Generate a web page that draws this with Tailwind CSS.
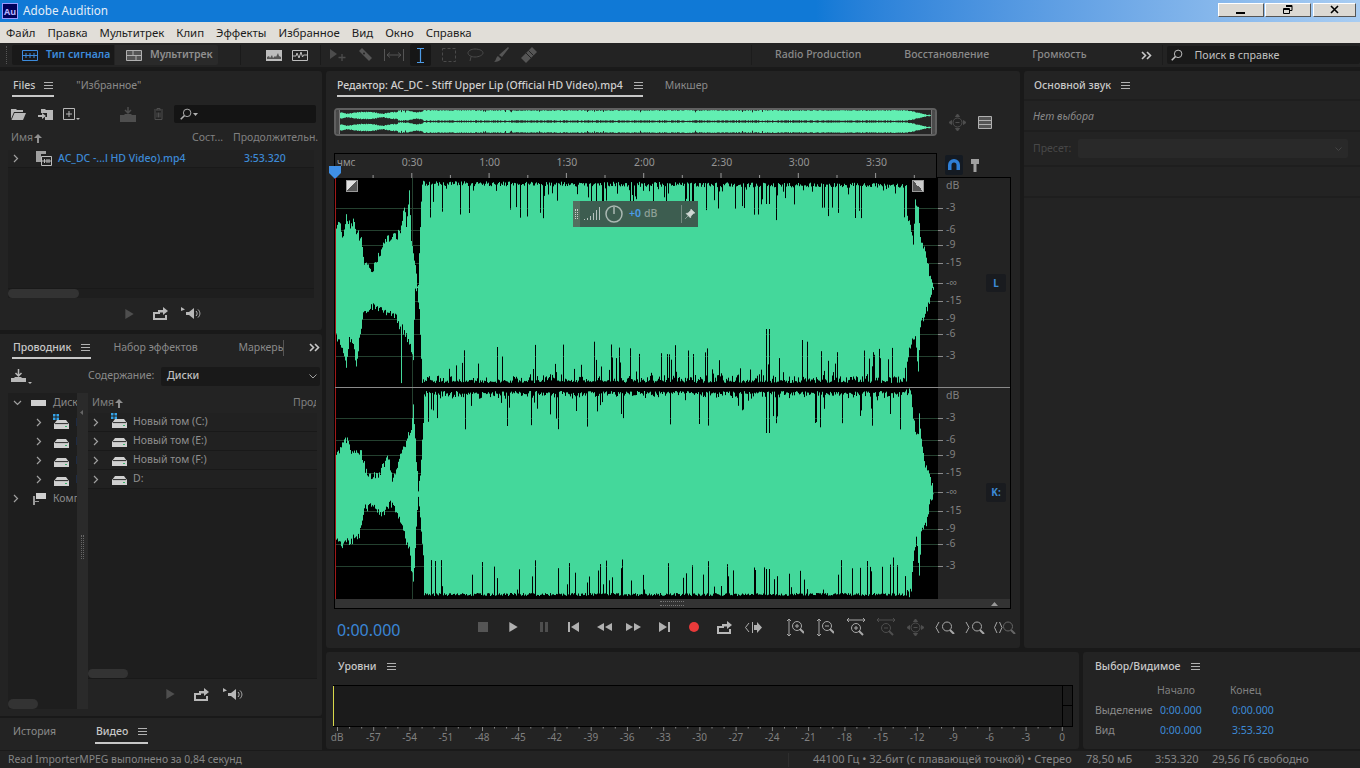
<!DOCTYPE html>
<html lang="ru">
<head>
    <meta charset="UTF-8">
    <title>Adobe Audition</title>
    <script src="https://cdn.jsdelivr.net/npm/@tailwindcss/browser@4"></script>
</head>
<body class="bg-[#191919] overflow-hidden">

<!-- shared icons -->
<svg class="hidden">
    <symbol id="i-menu" viewBox="0 0 9 8"><path d="M0 .5h9M0 3.5h9M0 6.5h9" stroke="currentColor" fill="none"/></symbol>
    <symbol id="i-chev" viewBox="0 0 6 9"><path d="M1 1l3.5 3.5L1 8" stroke="currentColor" fill="none" stroke-width="1.2"/></symbol>
    <symbol id="i-drive" viewBox="0 0 15 9"><path d="M3 0h9l3 4v5H0V4z" fill="#d0d0d0"/><path d="M1 3.600h13" stroke="#2a2a2a"/><rect x="11" y="6" width="2" height="1" fill="#39b36b"/></symbol>
    <symbol id="i-win" viewBox="0 0 6 6"><path d="M0 0h2.500v2.500H0zM3.500 0H6v2.500H3.500zM0 3.500h2.500V6H0zM3.500 3.500H6V6H3.500z" fill="#35a3e8"/></symbol>
    <symbol id="i-export" viewBox="0 0 15 13"><path d="M0 5h7v2H2v4h10V8h2v5H0z" fill="currentColor"/><path d="M5 6V3h5V0l5 4-5 4V5.500H7V6z" fill="currentColor"/></symbol>
    <symbol id="i-vol" viewBox="0 0 21 13"><path d="M0 0l4 2.500L0 4z" fill="currentColor"/><path d="M5 5h3l5-4v11l-5-4H5z" fill="currentColor"/><path d="M15 4c1.500 1.500 1.500 3.500 0 5M17 2.500c2.500 2.500 2.500 5.500 0 8" stroke="currentColor" fill="none"/></symbol>
    <symbol id="i-play" viewBox="0 0 10 12"><path d="M0 0l10 6-10 6z" fill="currentColor"/></symbol>
    <symbol id="i-mag" viewBox="0 0 16 16"><circle cx="6.500" cy="6.500" r="5" stroke="currentColor" fill="none" stroke-width="1.300"/><path d="M10 10l5 5" stroke="currentColor" stroke-width="2.200"/></symbol>
</svg>

<div class="w-[1360px] h-[768px] flex flex-col font-['Noto_Sans','Liberation_Sans',sans-serif] text-[10.500px] text-[#9a9a9a] overflow-hidden whitespace-nowrap [&_svg]:shrink-0">

    <!-- title bar -->
    <div class="h-[22px] flex items-center bg-gradient-to-r from-[#1079d6] from-60% to-[#a9cdf2] shrink-0">
        <div class="w-[16px] h-[16px] ml-[2px] bg-[#00005b] border border-[#9999ff] flex items-center justify-center text-[9px] font-bold text-[#b0b0ff] leading-none">Au</div>
        <div class="ml-[5px] text-[11.700px] text-[#e4eef8]">Adobe Audition</div>
        <div class="ml-auto flex mr-[4px] gap-[1px] -mt-[2px]">
            <div class="w-[46px] h-[14px] bg-[#dcd9d3] border-t border-l border-white border-r border-b border-r-[#555] border-b-[#555] flex items-center justify-center">
                <svg class="w-[10px] h-[10px]" viewBox="0 0 10 10"><path d="M0 7h9v2H0z" fill="#000"/></svg>
            </div>
            <div class="w-[46px] h-[14px] bg-[#dcd9d3] border-t border-l border-white border-r border-b border-r-[#555] border-b-[#555] flex items-center justify-center">
                <svg class="w-[10px] h-[10px]" viewBox="0 0 10 10"><path d="M3 .5h6v5H7M3 1.500h6M.5 3.500h6v5h-6zM.5 4.500h6" stroke="#000" fill="none"/></svg>
            </div>
            <div class="w-[43px] h-[14px] ml-[1px] bg-[#dcd9d3] border-t border-l border-white border-r border-b border-r-[#555] border-b-[#555] flex items-center justify-center">
                <svg class="w-[10px] h-[10px]" viewBox="0 0 10 10"><path d="M1 1l7 7M8 1L1 8" stroke="#000" stroke-width="1.600" fill="none"/></svg>
            </div>
        </div>
    </div>

    <!-- menu bar -->
    <div class="h-[21px] flex items-center gap-[12px] pl-[6px] bg-[#e1ded8] text-[11.400px] text-[#1c1c1c] shrink-0">
        <span>Файл</span><span>Правка</span><span>Мультитрек</span><span>Клип</span><span>Эффекты</span><span>Избранное</span><span>Вид</span><span>Окно</span><span>Справка</span>
    </div>

    <!-- toolbar -->
    <div class="h-[26px] flex items-center bg-[#232323] border-b-2 border-[#1a1a1a] shrink-0">
        <div class="w-[2px] h-[18px] ml-[6px] border-l border-dotted border-[#555]"></div>
        <div class="ml-[4px] w-[102px] h-[20px] bg-[#191919] rounded-l-[2px] flex items-center text-[#3d8bdb] font-semibold">
            <svg class="w-[16px] h-[11px] ml-[10px]" viewBox="0 0 16 11"><path d="M.5.500h15v10H.5zM0 5.500h16M4 3v5M8 3v5M12 3v5" stroke="currentColor" fill="none"/></svg>
            <span class="ml-[8px]">Тип сигнала</span>
        </div>
        <div class="ml-[1px] w-[103px] h-[20px] bg-[#2a2a2a] rounded-r-[2px] flex items-center font-semibold text-[#8f8f8f]">
            <svg class="w-[16px] h-[11px] ml-[11px]" viewBox="0 0 16 11"><path d="M.5.500h15v10H.5zM0 5.500h16M7 .5v5M10 5.500v5" stroke="#b0b0b0" fill="#555"/></svg>
            <span class="ml-[8px]">Мультитрек</span>
        </div>
        <div class="w-[1px] h-[20px] ml-[22px] bg-[#1a1a1a]"></div>
        <svg class="w-[16px] h-[11px] ml-[25px]" viewBox="0 0 16 11"><rect width="16" height="11" fill="#bdbdbd"/><path d="M1 9V7l2-1 1 2 2-3 1 3 2-2 1 1 2-4 1 3 2 1v2z" fill="#555"/></svg>
        <svg class="w-[16px] h-[11px] ml-[10px]" viewBox="0 0 16 11"><path d="M.5.500h15v10H.5z" stroke="#bdbdbd" fill="none"/><path d="M1 6h3l1-3 2 5 2-6 1.500 5 1-2H15" stroke="#bdbdbd" fill="none"/></svg>
        <div class="w-[1px] h-[20px] ml-[12px] bg-[#1a1a1a]"></div>
        <svg class="w-[16px] h-[13px] ml-[9px] text-[#4c4c4c]" viewBox="0 0 16 13"><path d="M0 0l7 5-7 5z" fill="currentColor"/><path d="M12 5v7M8.500 8.500h7" stroke="currentColor" stroke-width="1.300"/></svg>
        <svg class="w-[15px] h-[15px] ml-[12px] text-[#555]" viewBox="0 0 15 15"><path d="M4 0l10 10-3 3L1 3z" fill="currentColor"/><circle cx="6" cy="5.500" r="1" fill="#232323"/></svg>
        <svg class="w-[20px] h-[12px] ml-[11px] text-[#555]" viewBox="0 0 20 12"><path d="M.5 0v12M19.500 0v12M3 6h14M3 6l3-2.500M3 6l3 2.500M17 6l-3-2.500M17 6l-3 2.500" stroke="currentColor" fill="none"/></svg>
        <div class="w-[21px] h-[22px] ml-[6px] bg-[#161616] rounded-[2px] flex items-center justify-center">
            <svg class="w-[7px] h-[15px] text-[#4d9be6]" viewBox="0 0 7 15"><path d="M0 .5h7M0 14.500h7M3.500 .5v14" stroke="currentColor" fill="none" stroke-width="1.200"/></svg>
        </div>
        <svg class="w-[14px] h-[14px] ml-[11px] text-[#4a4a4a]" viewBox="0 0 14 14"><path d="M.5.500h13v13H.5z" stroke="currentColor" stroke-dasharray="3 2" fill="none"/></svg>
        <svg class="w-[17px] h-[14px] ml-[11px] text-[#4a4a4a]" viewBox="0 0 17 14"><path d="M8 1c5 0 8 2 8 4s-4 4-8 4-7-2-7-4 3-4 7-4zM4 9l-1 4" stroke="currentColor" fill="none"/></svg>
        <svg class="w-[16px] h-[16px] ml-[9px] text-[#555]" viewBox="0 0 16 16"><path d="M15 0l1 1-7 9-3-2zM5 9l3 3c-1 2-4 3-7 3 2-1 2-5 4-6z" fill="currentColor"/></svg>
        <svg class="w-[16px] h-[16px] ml-[12px] text-[#555]" viewBox="0 0 16 16"><path d="M11 0l5 5L5 16l-5-5z" fill="currentColor"/><path d="M5 6l5 5M7.500 3.500l5 5" stroke="#232323"/></svg>
        <div class="w-[1px] h-[20px] ml-[214px] bg-[#1c1c1c]"></div>
        <span class="ml-[23px] font-medium text-[#8a8a8a]">Radio Production</span>
        <span class="ml-[43px] font-medium text-[#8a8a8a]">Восстановление</span>
        <span class="ml-[43px] font-medium text-[#8a8a8a]">Громкость</span>
        <svg class="w-[11px] h-[9px] ml-[54px] text-[#c8c8c8]" viewBox="0 0 11 9"><path d="M1 1l3.500 3.500L1 8M6 1l3.500 3.500L6 8" stroke="currentColor" stroke-width="1.600" fill="none"/></svg>
        <div class="w-[1px] h-[20px] ml-[10px] bg-[#1c1c1c]"></div>
        <div class="ml-[4px] w-[193px] h-[18px] bg-[#191919] rounded-[2px] flex items-center text-[#c0c0c0]">
            <svg class="w-[12px] h-[12px] ml-[4px] -scale-x-100 text-[#c0c0c0]"><use href="#i-mag"/></svg>
            <span class="ml-[12px] mt-[1px] text-[10.700px]">Поиск в справке</span>
        </div>
    </div>

    <!-- workspace -->
    <div class="flex-1 flex min-h-0 pt-[2px]">

        <!-- left column -->
        <div class="w-[322px] flex flex-col shrink-0">
            <!-- files -->
            <div class="h-[259px] bg-[#232323] rounded-r-[3px] flex flex-col">
                <div class="flex items-center h-[26px] pl-[12px]">
                    <div class="h-[26px] pt-[5px] flex items-center gap-[9px] border-b-2 border-[#c8c8c8] px-[1px] text-[#c8c8c8] font-medium">
                        <span>Files</span>
                        <svg class="w-[9px] h-[8px] text-[#b0b0b0]"><use href="#i-menu"/></svg>
                    </div>
                    <span class="ml-[22px] mt-[3px] text-[#8a8a8a]">"Избранное"</span>
                </div>
                <div class="flex items-center h-[20px] mt-[7px]">
                    <svg class="w-[15px] h-[12px] ml-[11px]" viewBox="0 0 15 12"><path d="M0 1h5l1 1h6v2H3L0 11z" fill="#b8b8b8"/><path d="M3.500 5H15l-3 7H.5z" fill="#b8b8b8"/></svg>
                    <svg class="w-[16px] h-[13px] ml-[12px]" viewBox="0 0 16 13"><path d="M3 1h4l1 1h7v10H7V9h2V5H3z" fill="#b8b8b8"/><path d="M0 7h4V5l4 3-4 3V9H0z" fill="#b8b8b8"/></svg>
                    <svg class="w-[17px] h-[13px] ml-[9px]" viewBox="0 0 17 13"><path d="M.5.500h11v11H.5zM3 6h6M6 3v6" stroke="#b8b8b8" fill="none"/><path d="M13 10h4l-2 2z" fill="#b8b8b8"/></svg>
                    <svg class="w-[20px] h-[15px] ml-[40px] text-[#4e4e4e]" viewBox="0 0 20 15"><path d="M0 8h4l1-1h6l1 1h4v7H0z" fill="currentColor"/><path d="M8 0v5M5 3l3 3 3-3" stroke="currentColor" stroke-width="1.500" fill="none"/></svg>
                    <svg class="w-[11px] h-[12px] ml-[13px] text-[#4e4e4e]" viewBox="0 0 11 12"><path d="M1 2h9M4 2V.5h3V2M2 3v8.500h7V3M4 4.500v5M5.500 4.500v5M7 4.500v5" stroke="currentColor" fill="none"/></svg>
                    <div class="ml-[10px] w-[142px] h-[18px] bg-[#141414] rounded-[2px] flex items-center text-[#b0b0b0]">
                        <svg class="w-[12px] h-[12px] ml-[6px] -scale-x-100"><use href="#i-mag"/></svg>
                        <svg class="w-[5px] h-[3px] ml-[1px]" viewBox="0 0 5 3"><path d="M0 0h5L2.500 3z" fill="currentColor"/></svg>
                    </div>
                </div>
                <div class="flex items-center h-[16px] mt-[6px] text-[#808080]">
                    <span class="ml-[11px] w-[21px]">Имя</span>
                    <svg class="w-[8px] h-[9px] ml-[2px]" viewBox="0 0 8 9"><path d="M4 0l4 4H5v5H3V4H0z" fill="#909090"/></svg>
                    <span class="ml-[150px] w-[32px]">Сост...</span>
                    <span class="ml-[9px] w-[85px] overflow-hidden">Продолжительн.</span>
                </div>
                <div class="mt-[4px] mx-[8px] h-[148px] bg-[#1e1e1e] flex flex-col relative">
                    <div class="h-[18px] flex items-center border-b border-[#191919] bg-[#212121]">
                        <svg class="w-[6px] h-[9px] ml-[5px] text-[#a0a0a0]"><use href="#i-chev"/></svg>
                        <svg class="w-[16px] h-[15px] ml-[17px]" viewBox="0 0 16 15"><path d="M0 0h10v3H0zM0 3h5v8H0zM1 1h1M4 1h1M7 1h1" fill="#a0a0a0"/><path d="M5.500 5.500h10v9h-10zM5.500 10h10M8.500 8v4M11 8v4M13 8v4" stroke="#bdbdbd" fill="#222"/></svg>
                        <span class="ml-[6px] w-[186px] text-[#3d8ad6] font-medium">AC_DC -...l HD Video).mp4</span>
                        <span class="text-[#3d8ad6] font-medium">3:53.320</span>
                    </div>
                    <div class="mt-auto h-[10px] border-t border-[#191919]">
                        <div class="w-[71px] h-[9px] rounded-[5px] bg-[#333]"></div>
                    </div>
                </div>
                <div class="flex-1 flex items-center pb-[1px]">
                    <svg class="w-[9px] h-[10px] ml-[125px] text-[#4e4e4e]"><use href="#i-play"/></svg>
                    <svg class="w-[15px] h-[13px] ml-[19px] text-[#b8b8b8]"><use href="#i-export"/></svg>
                    <svg class="w-[21px] h-[13px] ml-[13px] text-[#b8b8b8]"><use href="#i-vol"/></svg>
                </div>
            </div>

            <!-- media browser -->
            <div class="h-[382px] mt-[4px] bg-[#232323] rounded-r-[3px] flex flex-col">
                <div class="flex items-center h-[25px] pl-[12px]">
                    <div class="h-[25px] pt-[5px] flex items-center gap-[10px] border-b-2 border-[#c8c8c8] px-[1px] text-[#c8c8c8] font-medium">
                        <span>Проводник</span>
                        <svg class="w-[9px] h-[8px] text-[#b0b0b0]"><use href="#i-menu"/></svg>
                    </div>
                    <span class="ml-[22px] mt-[3px] w-[85px] text-[#8a8a8a]">Набор эффектов</span>
                    <span class="ml-[40px] mt-[3px] w-[46px] overflow-hidden text-[#8a8a8a] border-r border-[#555]">Маркеры</span>
                    <svg class="w-[11px] h-[9px] ml-[25px] mt-[1px] text-[#c8c8c8]" viewBox="0 0 11 9"><path d="M1 1l3.500 3.500L1 8M6 1l3.500 3.500L6 8" stroke="currentColor" stroke-width="1.600" fill="none"/></svg>
                </div>
                <div class="flex items-center h-[20px] mt-[7px]">
                    <svg class="w-[23px] h-[15px] ml-[10px] text-[#b8b8b8]" viewBox="0 0 23 15"><path d="M1 9h3l1-1h6l1 1h4v4H1z" fill="currentColor"/><path d="M8.500 0v6M5.500 4l3 3 3-3" stroke="currentColor" stroke-width="1.500" fill="none"/><path d="M18 13h4l-2 2z" fill="currentColor"/></svg>
                    <span class="ml-[55px] w-[67px] text-[#8a8a8a]">Содержание:</span>
                    <div class="ml-[6px] w-[159px] h-[19px] bg-[#191919] rounded-[2px] flex items-center text-[#c0c0c0] font-medium">
                        <span class="ml-[6px]">Диски</span>
                        <svg class="w-[8px] h-[5px] ml-auto mr-[3px]" viewBox="0 0 8 5"><path d="M.5.500L4 4 7.500.5" stroke="#a0a0a0" fill="none"/></svg>
                    </div>
                </div>
                <div class="flex mt-[7px] ml-[8px] h-[316px] w-[309px]">
                    <!-- tree -->
                    <div class="w-[69px] h-[316px] bg-[#1e1e1e] flex flex-col overflow-hidden">
                        <div class="h-[20px] flex items-center mt-[0px]">
                            <svg class="w-[9px] h-[6px] ml-[5px]" viewBox="0 0 9 6"><path d="M1 1l3.500 3.500L8 1" stroke="#a0a0a0" fill="none" stroke-width="1.200"/></svg>
                            <div class="w-[15px] h-[6px] ml-[9px] bg-[#cfcfcf] shrink-0"></div>
                            <span class="ml-[7px] text-[#8a8a8a]">Диск</span>
                        </div>
                        <div class="h-[19px] flex items-center">
                            <svg class="w-[6px] h-[9px] ml-[28px] text-[#a0a0a0]"><use href="#i-chev"/></svg>
                            <span class="relative ml-[12px] shrink-0">
                                <svg class="block w-[15px] h-[9px] mt-[3px]"><use href="#i-drive"/></svg>
                                <svg class="absolute -left-[1px] -top-[3px] w-[6px] h-[6px]"><use href="#i-win"/></svg>
                            </span>
                            <span class="ml-[7px] text-[#8a8a8a]">Новый том (C:)</span>
                        </div>
                        <div class="h-[19px] flex items-center">
                            <svg class="w-[6px] h-[9px] ml-[28px] text-[#a0a0a0]"><use href="#i-chev"/></svg>
                            <svg class="w-[15px] h-[9px] ml-[12px] mt-[3px]"><use href="#i-drive"/></svg>
                            <span class="ml-[7px] text-[#8a8a8a]">Новый том (E:)</span>
                        </div>
                        <div class="h-[19px] flex items-center">
                            <svg class="w-[6px] h-[9px] ml-[28px] text-[#a0a0a0]"><use href="#i-chev"/></svg>
                            <svg class="w-[15px] h-[9px] ml-[12px] mt-[3px]"><use href="#i-drive"/></svg>
                            <span class="ml-[7px] text-[#8a8a8a]">Новый том (F:)</span>
                        </div>
                        <div class="h-[19px] flex items-center">
                            <svg class="w-[6px] h-[9px] ml-[28px] text-[#a0a0a0]"><use href="#i-chev"/></svg>
                            <svg class="w-[15px] h-[9px] ml-[12px] mt-[3px]"><use href="#i-drive"/></svg>
                            <span class="ml-[7px] text-[#8a8a8a]">D:</span>
                        </div>
                        <div class="h-[19px] flex items-center">
                            <svg class="w-[6px] h-[9px] ml-[5px] text-[#a0a0a0]"><use href="#i-chev"/></svg>
                            <svg class="w-[13px] h-[12px] ml-[14px]" viewBox="0 0 13 12"><path d="M3 0h10v6H3z" fill="#cfcfcf"/><path d="M0 3h2v9H0zM2 8h4v1H2z" fill="#9a9a9a"/></svg>
                            <span class="ml-[7px] text-[#8a8a8a]">Компьютер</span>
                        </div>
                        <div class="mt-auto h-[10px] shrink-0"><div class="w-[30px] h-[10px] rounded-[5px] bg-[#333]"></div></div>
                    </div>
                    <!-- splitter -->
                    <div class="w-[11px] h-[316px] bg-[#2a2a2a] flex flex-col items-center shrink-0">
                        <svg class="w-[3px] h-[5px] mt-[17px] ml-[-2px]" viewBox="0 0 3 5"><path d="M3 0v5L0 2.500z" fill="#666"/></svg>
                        <div class="w-[3px] h-[24px] mt-[120px] border-x border-dotted border-[#666]"></div>
                    </div>
                    <!-- list -->
                    <div class="w-[229px] flex flex-col shrink-0">
                        <div class="h-[20px] flex items-center text-[#808080] shrink-0">
                            <span class="ml-[4px] w-[21px]">Имя</span>
                            <svg class="w-[8px] h-[9px] ml-[2px]" viewBox="0 0 8 9"><path d="M4 0l4 4H5v5H3V4H0z" fill="#909090"/></svg>
                            <span class="ml-[170px] w-[23px] overflow-hidden">Продолжительность</span>
                        </div>
                        <div class="h-[266px] bg-[#1e1e1e] flex flex-col border-b border-[#191919] shrink-0">
                            <div class="h-[19px] flex items-center border-b border-[#191919] bg-[#212121]">
                                <svg class="w-[6px] h-[9px] ml-[5px] text-[#a0a0a0]"><use href="#i-chev"/></svg>
                                <span class="relative ml-[13px] shrink-0">
                                    <svg class="block w-[15px] h-[9px] mt-[3px]"><use href="#i-drive"/></svg>
                                    <svg class="absolute -left-[1px] -top-[3px] w-[6px] h-[6px]"><use href="#i-win"/></svg>
                                </span>
                                <span class="ml-[6px] text-[#8f8f8f]">Новый том (C:)</span>
                            </div>
                            <div class="h-[19px] flex items-center border-b border-[#191919] bg-[#212121]">
                                <svg class="w-[6px] h-[9px] ml-[5px] text-[#a0a0a0]"><use href="#i-chev"/></svg>
                                <svg class="w-[15px] h-[9px] ml-[13px] mt-[3px]"><use href="#i-drive"/></svg>
                                <span class="ml-[6px] text-[#8f8f8f]">Новый том (E:)</span>
                            </div>
                            <div class="h-[19px] flex items-center border-b border-[#191919] bg-[#212121]">
                                <svg class="w-[6px] h-[9px] ml-[5px] text-[#a0a0a0]"><use href="#i-chev"/></svg>
                                <svg class="w-[15px] h-[9px] ml-[13px] mt-[3px]"><use href="#i-drive"/></svg>
                                <span class="ml-[6px] text-[#8f8f8f]">Новый том (F:)</span>
                            </div>
                            <div class="h-[19px] flex items-center border-b border-[#191919] bg-[#212121]">
                                <svg class="w-[6px] h-[9px] ml-[5px] text-[#a0a0a0]"><use href="#i-chev"/></svg>
                                <svg class="w-[15px] h-[9px] ml-[13px] mt-[3px]"><use href="#i-drive"/></svg>
                                <span class="ml-[6px] text-[#8f8f8f]">D:</span>
                            </div>
                            <div class="mt-auto h-[9px]"><div class="w-[40px] h-[9px] rounded-[5px] bg-[#333]"></div></div>
                        </div>
                        <div class="flex-1 flex items-center">
                            <svg class="w-[9px] h-[10px] ml-[78px] text-[#4e4e4e]"><use href="#i-play"/></svg>
                            <svg class="w-[15px] h-[13px] ml-[19px] text-[#b8b8b8]"><use href="#i-export"/></svg>
                            <svg class="w-[21px] h-[13px] ml-[14px] text-[#b8b8b8]"><use href="#i-vol"/></svg>
                        </div>
                    </div>
                </div>
            </div>

            <!-- history / video -->
            <div class="h-[32px] mt-[2px] bg-[#232323] flex items-start pl-[13px]">
                <span class="w-[43px] mt-[6px] text-[#8a8a8a]">История</span>
                <div class="ml-[39px] h-[26px] pt-[3px] flex items-center gap-[10px] border-b-2 border-[#c8c8c8] px-[1px] text-[#c8c8c8] font-medium">
                    <span>Видео</span>
                    <svg class="w-[9px] h-[8px] text-[#b0b0b0]"><use href="#i-menu"/></svg>
                </div>
            </div>
        </div>

        <!-- right block -->
        <div class="w-[1034px] ml-[4px] flex flex-col">
            <div class="h-[577px] flex gap-[4px]">

                <!-- editor -->
                <div class="w-[694px] bg-[#232323] rounded-[3px] flex flex-col">
                    <div class="flex items-center h-[26px] pl-[11px]">
                        <div class="h-[26px] pt-[5px] flex items-center gap-[11px] border-b-2 border-[#c8c8c8] text-[#d0d0d0] font-medium">
                            <span>Редактор: AC_DC - Stiff Upper Lip (Official HD Video).mp4</span>
                            <svg class="w-[9px] h-[8px] text-[#b0b0b0]"><use href="#i-menu"/></svg>
                        </div>
                        <span class="ml-[22px] mt-[3px] text-[#8a8a8a]">Микшер</span>
                    </div>

                    <!-- overview -->
                    <div class="flex items-center h-[28px] mt-[11px] ml-[8px]">
                        <div class="w-[603px] h-[28px] rounded-[4px] border-2 border-[#606060] bg-[#262626] overflow-hidden flex">
                            <div class="w-[4px] h-full bg-[#4a4a4a] border-r border-[#777] shrink-0"></div>
                            <svg id="overview" class="w-[591px] h-[24px]" viewBox="338 110 591 24"></svg>
                            <div class="w-[4px] h-full bg-[#4a4a4a] border-l border-[#777] shrink-0"></div>
                        </div>
                        <svg class="w-[17px] h-[17px] ml-[12px] text-[#4e4e4e]" viewBox="0 0 17 17"><circle cx="8.500" cy="8.500" r="4.500" stroke="currentColor" fill="none"/><path d="M6.500 8.500h4M8.500 0l-2 2.500h4zM8.500 17l-2-2.500h4zM0 8.500l2.500-2v4zM17 8.500l-2.500-2v4z" stroke="currentColor" fill="currentColor"/></svg>
                        <svg class="w-[14px] h-[13px] ml-[12px] text-[#b0b0b0]" viewBox="0 0 14 13"><path d="M.5.500h13v12H.5zM.5 4.500h13M.5 8.500h13" stroke="currentColor" fill="none"/><path d="M1 1h12v3H1zM1 5h12v3H1zM1 9h12v3H1z" fill="#555"/></svg>
                    </div>

                    <!-- ruler -->
                    <div class="flex items-center h-[24px] mt-[17px] ml-[8px]">
                        <div class="relative w-[603px] h-[25px] bg-[#252525] border-t border-x border-black">
                            <div class="flex h-[18px] items-center text-[#949494]">
                                <span class="w-[38.500px] pl-[2px] text-[10px]">чмс</span>
                                <span class="w-[77.400px] text-center">0:30</span>
                                <span class="w-[77.400px] text-center">1:00</span>
                                <span class="w-[77.400px] text-center">1:30</span>
                                <span class="w-[77.400px] text-center">2:00</span>
                                <span class="w-[77.400px] text-center">2:30</span>
                                <span class="w-[77.400px] text-center">3:00</span>
                                <span class="w-[77.400px] text-center">3:30</span>
                            </div>
                            <svg id="ruler-ticks" class="absolute left-0 bottom-0 w-[601px] h-[8px]" viewBox="335 0 601 8"></svg>
                            <svg class="absolute -left-[6px] -bottom-[1px] w-[12px] h-[13px]" viewBox="0 0 12 13"><path d="M0 0h12v7l-6 6-6-6z" fill="#3f8fe6"/></svg>
                        </div>
                        <div class="ml-[8px] w-[18px] h-[20px] bg-[#141a22] rounded-[2px] flex items-center justify-center">
                            <svg class="w-[12px] h-[12px]" viewBox="0 0 12 12"><path d="M0 11V6a6 6 0 0 1 12 0v5H8.500V6a2.500 2.500 0 0 0-5 0v5z" fill="#2f7fd6"/></svg>
                        </div>
                        <svg class="w-[8px] h-[13px] ml-[8px]" viewBox="0 0 8 13"><path d="M0 0h8v5H5.500v8h-3V5H0z" fill="#a0a0a0"/></svg>
                    </div>

                    <!-- waveform + scale -->
                    <div class="ml-[8px] w-[677px] h-[432px] border border-black bg-[#232323] flex flex-col">
                        <div class="h-[421px] flex relative">
                            <svg id="wave" class="w-[603px] h-[421px] bg-black" viewBox="334 179 603 421"></svg>
                            <div id="db-scale" class="relative flex-1"></div>

                            <!-- fade handles -->
                            <div class="absolute left-[11px] top-[2px] w-[12px] h-[12px] border border-[#999] bg-gradient-to-br from-[#e0e0e0] from-50% to-[#555] to-50%"></div>
                            <div class="absolute left-[577px] top-[2px] w-[12px] h-[12px] border border-[#999] bg-gradient-to-bl from-[#ccc] from-50% to-[#555] to-50%"></div>

                            <!-- L / R channels -->
                            <div class="absolute left-[651px] top-[96px] w-[20px] h-[18px] bg-[#191b1f] rounded-[2px] flex items-center justify-center text-[#3d8ad6] text-[10px] font-bold">L</div>
                            <div class="absolute left-[651px] top-[305px] w-[20px] h-[19px] bg-[#191b1f] rounded-[2px] flex items-center justify-center text-[#3d8ad6] text-[10px] font-bold">K:</div>

                            <!-- channel divider -->
                            <div class="absolute left-[0px] top-[209px] w-[675px] h-[1px] bg-[#8a8a8a]"></div>

                            <!-- HUD -->
                            <div class="absolute left-[238px] top-[23px] w-[125px] h-[26px] bg-[#3d5d50] flex items-center">
                                <div class="w-[7px] h-[26px] bg-[#53705f] flex justify-center items-center">
                                    <div class="w-[3px] h-[10px] border-x border-dotted border-[#ccc]"></div>
                                </div>
                                <svg class="w-[16px] h-[14px] ml-[4px] text-[#b5c2bc]" viewBox="0 0 16 14"><path d="M.5 13v-1M3.500 13v-2M6.500 13V9M9.500 13V6M12.500 13V3M15.500 13V0" stroke="currentColor" fill="none"/></svg>
                                <svg class="w-[18px] h-[18px] ml-[5px] text-[#aab8b2]" viewBox="0 0 18 18"><circle cx="9" cy="9" r="8" stroke="currentColor" stroke-width="1.500" fill="none"/><path d="M9 2v7" stroke="currentColor" stroke-width="1.500"/></svg>
                                <span class="ml-[6px] w-[14px] text-[#4b9ce8] font-semibold">+0</span>
                                <span class="ml-[1px] w-[14px] text-[#8fa198] font-medium">dB</span>
                                <div class="w-[1px] h-[18px] ml-[23px] bg-[#748a80]"></div>
                                <svg class="w-[10px] h-[10px] ml-[3px]" viewBox="0 0 10 10"><path d="M6 0l4 4-1.500.5L6 7l-.5 2L1 4.500l2-.5L5.500 1.500zM3 7L0 10" fill="#d0d8d4" stroke="#d0d8d4" stroke-width=".5"/></svg>
                            </div>
                        </div>
                        <div class="h-[9px] bg-[#333] flex items-center">
                            <div class="ml-[325px] w-[24px] h-[5px] border-y border-dotted border-[#777]"></div>
                            <svg class="w-[7px] h-[4px] ml-[307px]" viewBox="0 0 7 4"><path d="M3.500 0L7 4H0z" fill="#999"/></svg>
                        </div>
                    </div>

                    <!-- transport -->
                    <div class="flex-1 flex items-center text-[#a8a8a8] pb-[3px]">
                        <span class="ml-[11px] w-[120px] text-[16px] text-[#3a86d6] mt-[6px]">0:00.000</span>
                        <div class="w-[10px] h-[10px] ml-[21px] bg-[#555]"></div>
                        <svg class="w-[9px] h-[10px] ml-[21px] text-[#b0b0b0]"><use href="#i-play"/></svg>
                        <svg class="w-[8px] h-[10px] ml-[22px]" viewBox="0 0 8 10"><path d="M0 0h3v10H0zM5 0h3v10H5z" fill="#4e4e4e"/></svg>
                        <svg class="w-[11px] h-[10px] ml-[20px]" viewBox="0 0 11 10"><path d="M0 0h2v10H0zM11 0v10L3 5z" fill="#b0b0b0"/></svg>
                        <svg class="w-[15px] h-[8px] ml-[18px]" viewBox="0 0 15 8"><path d="M7 0v8L0 4zM15 0v8L8 4z" fill="#b0b0b0"/></svg>
                        <svg class="w-[15px] h-[8px] ml-[14px]" viewBox="0 0 15 8"><path d="M0 0v8l7-4zM8 0v8l7-4z" fill="#b0b0b0"/></svg>
                        <svg class="w-[11px] h-[10px] ml-[18px]" viewBox="0 0 11 10"><path d="M0 0v10l8-5zM9 0h2v10H9z" fill="#b0b0b0"/></svg>
                        <div class="w-[10px] h-[10px] ml-[19px] rounded-full bg-[#e83a3a]"></div>
                        <svg class="w-[15px] h-[13px] ml-[18px] text-[#b8b8b8]"><use href="#i-export"/></svg>
                        <svg class="w-[17px] h-[11px] ml-[13px]" viewBox="0 0 17 11"><path d="M4 1L.5 5.500 4 10M7.500 0v11" stroke="#b0b0b0" fill="none"/><path d="M9 3h3V0l5 5.500-5 5.500V8H9z" fill="#b0b0b0"/></svg>
                        <!-- zoom tools -->
                        <svg class="w-[17px] h-[17px] ml-[25px]" viewBox="0 0 17 17"><path d="M2 0v17M0 2l2-2 2 2M0 15l2 2 2-2" stroke="#a8a8a8" fill="none"/><circle cx="10" cy="7" r="4.500" stroke="#a8a8a8" fill="none"/><path d="M8 7h4M10 5v4" stroke="#a8a8a8"/><path d="M13 10l4 4" stroke="#a8a8a8" stroke-width="2"/></svg>
                        <svg class="w-[17px] h-[17px] ml-[13px]" viewBox="0 0 17 17"><path d="M2 0v17M0 2l2-2 2 2M0 15l2 2 2-2" stroke="#a8a8a8" fill="none"/><circle cx="10" cy="7" r="4.500" stroke="#a8a8a8" fill="none"/><path d="M8 7h4" stroke="#a8a8a8"/><path d="M13 10l4 4" stroke="#a8a8a8" stroke-width="2"/></svg>
                        <svg class="w-[18px] h-[18px] ml-[13px]" viewBox="0 0 18 18"><path d="M0 2h18M2 0L0 2l2 2M16 0l2 2-2 2" stroke="#a8a8a8" fill="none"/><circle cx="9" cy="10" r="4.500" stroke="#a8a8a8" fill="none"/><path d="M7 10h4M9 8v4" stroke="#a8a8a8"/><path d="M12 13l4 4" stroke="#a8a8a8" stroke-width="2"/></svg>
                        <svg class="w-[18px] h-[18px] ml-[12px]" viewBox="0 0 18 18"><path d="M0 2h18M2 0L0 2l2 2M16 0l2 2-2 2" stroke="#4e4e4e" fill="none"/><circle cx="9" cy="10" r="4.500" stroke="#4e4e4e" fill="none"/><path d="M7 10h4" stroke="#4e4e4e"/><path d="M12 13l4 4" stroke="#4e4e4e" stroke-width="2"/></svg>
                        <svg class="w-[17px] h-[17px] ml-[12px] text-[#4e4e4e]" viewBox="0 0 17 17"><circle cx="8.500" cy="8.500" r="4.500" stroke="currentColor" fill="none"/><path d="M6.500 8.500h4M8.500 0l-2 2.500h4zM8.500 17l-2-2.500h4zM0 8.500l2.500-2v4zM17 8.500l-2.500-2v4z" stroke="currentColor" fill="currentColor"/></svg>
                        <svg class="w-[21px] h-[13px] ml-[11px]" viewBox="0 0 21 13"><path d="M4 1L1 6.500 4 12" stroke="#a8a8a8" fill="none"/><circle cx="12" cy="5.500" r="4.500" stroke="#a8a8a8" fill="none"/><path d="M15 9l4 4" stroke="#a8a8a8" stroke-width="2"/></svg>
                        <svg class="w-[21px] h-[13px] ml-[9px]" viewBox="0 0 21 13"><path d="M1 1l3 5.500L1 12" stroke="#a8a8a8" fill="none"/><circle cx="12" cy="5.500" r="4.500" stroke="#a8a8a8" fill="none"/><path d="M15 9l4 4" stroke="#a8a8a8" stroke-width="2"/></svg>
                        <svg class="w-[22px] h-[13px] ml-[8px]" viewBox="0 0 22 13"><path d="M3 1L.5 6.500 3 12M5.500 1L8 6.500 5.500 12" stroke="#a8a8a8" fill="none"/><circle cx="14" cy="5.500" r="4.500" stroke="#666" fill="none"/><path d="M17 9l4 4" stroke="#666" stroke-width="2"/></svg>
                    </div>
                </div>

                <!-- essential sound -->
                <div class="w-[336px] bg-[#232323] rounded-l-[3px] flex flex-col">
                    <div class="h-[30px] pt-[1px] flex items-center pl-[10px] gap-[10px] border-b-2 border-[#1e1e1e]">
                        <span class="text-[#c8c8c8] font-medium">Основной звук</span>
                        <svg class="w-[9px] h-[8px] text-[#b0b0b0]"><use href="#i-menu"/></svg>
                    </div>
                    <div class="h-[31px] pt-[2px] flex items-center pl-[9px] border-b-2 border-[#1e1e1e] italic text-[#8a8a8a]">Нет выбора</div>
                    <div class="h-[35px] flex items-center pl-[9px] border-b-2 border-[#1e1e1e] text-[#484848]">
                        <span class="w-[45px]">Пресет:</span>
                        <div class="w-[270px] h-[19px] bg-[#292929] rounded-[2px] flex items-center justify-end pr-[6px]">
                            <svg class="w-[7px] h-[4px]" viewBox="0 0 7 4"><path d="M.5.500l3 3 3-3" stroke="#444" fill="none"/></svg>
                        </div>
                    </div>
                    <div class="h-[31px] border-b-2 border-[#1e1e1e]"></div>
                </div>
            </div>

            <!-- levels + selection -->
            <div class="h-[97px] mt-[4px] flex gap-[4px]">
                <div class="w-[753px] bg-[#232323] rounded-[3px] flex flex-col">
                    <div class="h-[29px] flex items-center pl-[12px] gap-[10px]">
                        <span class="text-[#c8c8c8] font-medium">Уровни</span>
                        <svg class="w-[9px] h-[8px] text-[#b0b0b0]"><use href="#i-menu"/></svg>
                    </div>
                    <div class="ml-[7px] mt-[4px] w-[740px] h-[42px] bg-[#1b1b1b] border border-black flex">
                        <div class="w-[1px] h-full bg-[#d8d84a] -ml-[1px]"></div>
                        <div class="ml-auto w-[10px] h-full border-l border-black flex flex-col">
                            <div class="h-[20px] border-b border-black"></div>
                        </div>
                    </div>
                    <svg id="level-ticks" class="ml-[7px] w-[740px] h-[4px]" viewBox="0 0 740 4"></svg>
                    <div id="level-labels" class="flex ml-[-7px] h-[13px] items-center text-[10px] text-[#808080]"></div>
                </div>
                <div class="w-[277px] bg-[#232323] rounded-l-[3px] flex flex-col">
                    <div class="h-[29px] flex items-center pl-[12px] gap-[10px]">
                        <span class="text-[#c8c8c8] font-medium">Выбор/Видимое</span>
                        <svg class="w-[9px] h-[8px] text-[#b0b0b0]"><use href="#i-menu"/></svg>
                    </div>
                    <div class="grid grid-cols-[65px_72px_auto] pl-[12px] auto-rows-[20px] items-center">
                        <span></span><span class="-ml-[3px] text-[#808080]">Начало</span><span class="-ml-[2px] text-[#808080]">Конец</span>
                        <span class="text-[#8a8a8a]">Выделение</span><span class="text-[#3d8ad6]">0:00.000</span><span class="text-[#3d8ad6]">0:00.000</span>
                        <span class="text-[#8a8a8a]">Вид</span><span class="text-[#3d8ad6]">0:00.000</span><span class="text-[#3d8ad6]">3:53.320</span>
                    </div>
                </div>
            </div>
        </div>
    </div>

    <!-- status bar -->
    <div class="h-[18px] flex items-center bg-[#232323] text-[#868686] text-[11px] border-t border-[#1a1a1a] shrink-0">
        <span class="ml-[8px] w-[757px] text-[10.400px]">Read ImporterMPEG выполнено за 0,84 секунд</span>
        <div class="w-[1px] h-[14px] bg-[#2e2e2e] ml-[23px]"></div>
        <span class="ml-[24px] w-[258px]">44100 Гц • 32-бит (с плавающей точкой) • Стерео</span>
        <span class="ml-[15px] w-[44px]">78,50 мБ</span>
        <span class="ml-[25px] w-[41px]">3:53.320</span>
        <span class="ml-[16px]">29,56 Гб свободно</span>
    </div>
</div>

<script>
    // псевдослучайные числа, чтобы волна всегда была одинаковой
    let seed = 12345;
    function rnd() {
        seed = (seed * 1103515 + 12345) % 2147483648;
        return seed / 2147483648;
    }

    // линейная интерполяция по таблице точек [x, y]
    function lerp(table, x) {
        for (let i = 1; i < table.length; i++) {
            if (x <= table[i][0]) {
                const [x0, y0] = table[i - 1];
                const [x1, y1] = table[i];
                return y0 + (y1 - y0) * (x - x0) / (x1 - x0);
            }
        }
        return table[table.length - 1][1];
    }

    const topUp = [[334,232],[338,222],[341,238],[345,215],[349,225],[352,222],[356,232],[360,240],[362,258],[366,266],[370,270],[375,262],[380,248],[385,240],[390,238],[396,235],[400,228],[403,205],[405,226],[408,190],[410,240],[413,262],[415,275],[417,300],[418,250],[420,205],[421,182],[905,184],[906,215],[909,222],[912,240],[914,200],[917,205],[919,240],[924,250],[928,272],[931,282],[933,284]];
    const topDn = [[334,338],[340,345],[345,368],[348,342],[352,345],[355,366],[358,340],[362,318],[370,308],[380,310],[395,318],[399,330],[400,386],[401,330],[410,350],[412,358],[414,290],[417,285],[419,340],[421,384],[905,384],[906,360],[910,345],[914,335],[917,375],[919,325],[924,315],[928,305],[931,292],[933,285]];
    const botUp = [[334,450],[337,453],[345,440],[350,450],[360,455],[365,473],[372,477],[378,473],[387,457],[391,480],[397,463],[403,447],[410,427],[412,408],[414,443],[417,490],[420,463],[422,420],[423,392],[908,392],[910,395],[912,415],[914,430],[917,432],[918,415],[920,440],[924,468],[928,475],[931,488],[933,493]];
    const botDn = [[334,540],[340,548],[350,543],[358,537],[363,512],[370,508],[380,517],[391,505],[397,520],[402,533],[408,553],[412,588],[415,530],[417,497],[420,530],[422,557],[423,597],[908,597],[910,590],[912,560],[915,540],[918,575],[920,535],[925,525],[928,510],[931,498],[933,494]];

    // линии сетки dB
    const gridY = [209,231,246,264,284,302,320,335,357,419,441,456,474,493,512,530,545,567];
    let grid = 'M411.500 179V600';
    gridY.forEach(y => grid += `M334 ${y + .5}H937`);

    let green = '';
    for (let x = 335; x < 933; x++) {
        const inMiddle = x >= 423 && x < 905;
        let a = lerp(topUp, x), b = lerp(topDn, x), c = lerp(botUp, x), d = lerp(botDn, x);
        if (inMiddle) {
            // мелкая неровность и длинные чёрные пики
            a += rnd() * 5;
            d -= rnd() * 3;
            b -= rnd() * 3;
            c += rnd() * 3;
            if (rnd() < .18) a += rnd() * 36;
            if (rnd() < .13) d -= 4 + rnd() * 32;
            if (rnd() < .5) b -= rnd() * 6;
            if (rnd() < .5) c += rnd() * 5;
            if (rnd() < .14) b -= 8 + rnd() * 30;
            if (rnd() < .1) c += 6 + rnd() * 28;
        } else {
            // по краям волна более рваная
            a += rnd() * 9 - 3;
            d += 3 - rnd() * 9;
            b += rnd() * 9 - 5;
            c += rnd() * 9 - 4;
        }
        // тонкие пики в районе 2:50
        if (x === 765 || x === 768) { a = 205; b = 330; c = 434; d = 570; }
        green += `M${x + .5} ${a.toFixed(1)}V${b.toFixed(1)}M${x + .5} ${c.toFixed(1)}V${d.toFixed(1)}`;
    }
    document.getElementById('wave').innerHTML =
        `<path d="${grid}" stroke="#24402f" fill="none"/>` +
        `<path d="${green}" stroke="#44d89b" fill="none"/>` +
        `<rect x="334" y="179" width="1" height="421" fill="#a01818"/>`;

    // обзор всего файла
    let mint = '';
    for (let x = 338; x < 929; x++) {
        let amp = 5.5;
        if (x < 421) amp = 2 + Math.abs(Math.sin(x / 11)) * 2 + (x > 395 ? 1.500 : 0);
        if (x > 905) amp = Math.max(1, 5.500 * (929 - x) / 24);
        const j = rnd() * .8;
        const notch = rnd() < .03 ? 1.500 : 0;
        mint += `M${x + .5} ${(115.5 - amp + j + notch).toFixed(1)}V${(115.5 + amp - j).toFixed(1)}`;
        mint += `M${x + .5} ${(127.5 - amp + j).toFixed(1)}V${(127.5 + amp - j - notch).toFixed(1)}`;
    }
    document.getElementById('overview').innerHTML = `<path d="${mint}" stroke="#62efb2" fill="none"/>`;

    // деления на линейке времени
    let rulerPath = '';
    for (let i = 0; i < 16; i++) {
        const x = 334.5 + i * 38.65;
        rulerPath += `M${x.toFixed(1)} ${i % 2 ? 5 : 3}V8`;
    }
    document.getElementById('ruler-ticks').innerHTML = `<path d="${rulerPath}" stroke="#9a9a9a" fill="none"/>`;

    // шкала dB, y отсчитывается от начала волны (179)
    const dbLabels = [['dB',187],['-3',209],['-6',231],['-9',246],['-15',264],['-∞',284],['-15',302],['-9',320],['-6',335],['-3',357],
                      ['dB',397],['-3',419],['-6',441],['-9',456],['-15',474],['-∞',493],['-15',512],['-9',530],['-6',545],['-3',567]];
    const scale = document.getElementById('db-scale');
    dbLabels.forEach(([label, y]) => {
        const top = y - 179;
        const el = document.createElement('div');
        el.className = 'absolute left-[8px] text-[#808080] leading-none';
        el.style.top = (top - 6) + 'px';
        el.textContent = label;
        scale.appendChild(el);
        if (label !== 'dB') {
            const tick = document.createElement('div');
            tick.className = 'absolute left-0 w-[5px] h-[1px] bg-[#8a8a8a]';
            tick.style.top = top + 'px';
            scale.appendChild(tick);
        }
    });

    // шкала уровней
    const levels = ['dB','-57','-54','-51','-48','-45','-42','-39','-36','-33','-30','-27','-24','-21','-18','-15','-12','-9','-6','-3','0'];
    const levelBox = document.getElementById('level-labels');
    let levelPath = '';
    levels.forEach(label => {
        const el = document.createElement('span');
        el.className = 'w-[36.250px] text-center shrink-0';
        el.textContent = label;
        levelBox.appendChild(el);
    });
    for (let i = 0; i < 61; i++) {
        const x = 4.5 + i * 12.08;
        levelPath += `M${x.toFixed(1)} 0V${i % 3 ? 1.500 : 4}`;
    }
    document.getElementById('level-ticks').innerHTML = `<path d="${levelPath}" stroke="#888" fill="none"/>`;
</script>
</body>
</html>
